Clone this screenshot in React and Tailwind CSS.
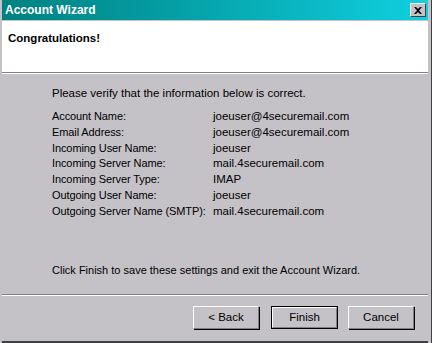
import React from 'react';

const ROWS = [
  ['Account Name:', 'joeuser@4securemail.com'],
  ['Email Address:', 'joeuser@4securemail.com'],
  ['Incoming User Name:', 'joeuser'],
  ['Incoming Server Name:', 'mail.4securemail.com'],
  ['Incoming Server Type:', 'IMAP'],
  ['Outgoing User Name:', 'joeuser'],
  ['Outgoing Server Name (SMTP):', 'mail.4securemail.com'],
];

const font = { fontFamily: '"Liberation Sans", Arial, sans-serif' };

const Btn = ({ children, primary }) => (
  <button
    className={`h-[23px] bg-[#c4c2c7] text-[11.5px] text-black flex items-center justify-center ${
      primary ? 'w-[67px] border border-black' : 'w-[66px]'
    }`}
  >
    <span className="w-full h-full flex items-center justify-center border-t border-l border-white border-r border-b border-r-[#808080] border-b-[#808080] shadow-[1px_1px_0_#000]">
      {children}
    </span>
  </button>
);

export default function App() {
  return (
    <div
      className="w-[432px] h-[343px] bg-[#c4c2c7] flex flex-col pl-[2px] pr-[3px] border-r border-r-[#404040] overflow-hidden"
      style={font}
    >
      {/* Title bar */}
      <div className="h-[20px] shrink-0 flex items-center justify-between bg-gradient-to-r from-[#008080] to-[#10d0e0] pl-[3px] pr-[2px]">
        <span className="text-white font-bold text-[12px] leading-none">Account Wizard</span>
        <div className="w-[16px] h-[14px] bg-[#c4c2c7] border-t border-l border-white border-r border-b border-r-[#404040] border-b-[#404040] flex items-center justify-center">
          <svg width="8" height="7" viewBox="0 0 8 7">
            <path d="M0 0h2l2 2 2-2h2L5 3.5 8 7H6L4 5 2 7H0l3-3.5z" fill="#000" />
          </svg>
        </div>
      </div>

      {/* Header */}
      <div className="mt-[1px] h-[52px] shrink-0 bg-white pl-[6px] pt-[10px] border-b border-b-[#808080]">
        <div className="font-bold text-[11.5px] leading-[14px] text-black">Congratulations!</div>
      </div>
      <div className="h-px bg-white shrink-0" />

      {/* Body */}
      <div className="flex-1 flex flex-col pl-[50px] text-[11.5px] text-black whitespace-nowrap">
        <div className="mt-[11px] leading-[16px]">Please verify that the information below is correct.</div>
        <div className="mt-[8px] flex flex-col">
          {ROWS.map(([label, value]) => (
            <div key={label} className="flex leading-[15.8px]">
              <span className="w-[161px] shrink-0 text-[11px] tracking-[-0.1px]">{label}</span>
              <span>{value}</span>
            </div>
          ))}
        </div>
        <div className="mt-[42px] leading-[16px] text-[11px]">Click Finish to save these settings and exit the Account Wizard.</div>
      </div>

      {/* Footer */}
      <div className="shrink-0 border-t border-t-[#808080]" />
      <div className="shrink-0 h-[48px] border-t border-t-white border-b-2 border-b-[#404040] flex justify-end items-start pt-[10px] pr-[14px]">
        <Btn>&lt; Back</Btn>
        <div className="w-[12px]" />
        <Btn primary>Finish</Btn>
        <div className="w-[10px]" />
        <Btn>Cancel</Btn>
      </div>
    </div>
  );
}
